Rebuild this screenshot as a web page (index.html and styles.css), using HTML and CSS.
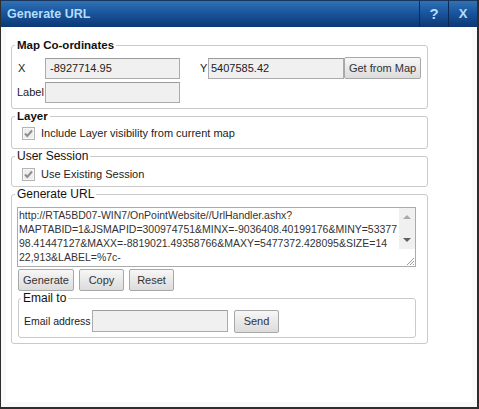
FILE: index.html
```html
<!DOCTYPE html>
<html lang="en">
<head>
    <meta charset="UTF-8">
    <meta name="viewport" content="width=device-width, initial-scale=1.0">
    <title>Generate URL</title>
    <link rel="stylesheet" href="styles.css">
</head>
<body>
    <div class="dialog">
        <div class="titlebar">
            <span class="title">Generate URL</span>
            <span class="title-button help">?</span>
            <span class="title-button close">X</span>
        </div>

        <div class="dialog-body">
            <fieldset class="group group-map">
                <legend class="strong">Map Co-ordinates</legend>
                <div class="row">
                    <label class="field-label label-x">X</label>
                    <input class="text-input" type="text" value="-8927714.95">
                    <label class="field-label label-y">Y</label>
                    <input class="text-input input-y" type="text" value="5407585.42">
                    <button class="btn btn-map">Get from Map</button>
                </div>
                <div class="row">
                    <label class="field-label">Label</label>
                    <input class="text-input" type="text">
                </div>
            </fieldset>

            <fieldset class="group group-layer">
                <legend class="strong">Layer</legend>
                <div class="check-row">
                    <span class="check">
                        <svg width="13" height="13" viewBox="0 0 13 13">
                            <rect x="0.5" y="0.5" width="12" height="12" fill="#e4e4e4" stroke="#b4b4b4"/>
                            <rect x="1.5" y="1.5" width="10" height="10" fill="#eeeeee" stroke="#f7f7f7"/>
                            <path d="M3 6.5 L5.3 9 L10 3.5" fill="none" stroke="#8e8e8e" stroke-width="2"/>
                        </svg>
                    </span>
                    <span>Include Layer visibility from current map</span>
                </div>
            </fieldset>

            <fieldset class="group group-session">
                <legend>User Session</legend>
                <div class="check-row">
                    <span class="check">
                        <svg width="13" height="13" viewBox="0 0 13 13">
                            <rect x="0.5" y="0.5" width="12" height="12" fill="#e4e4e4" stroke="#b4b4b4"/>
                            <rect x="1.5" y="1.5" width="10" height="10" fill="#eeeeee" stroke="#f7f7f7"/>
                            <path d="M3 6.5 L5.3 9 L10 3.5" fill="none" stroke="#8e8e8e" stroke-width="2"/>
                        </svg>
                    </span>
                    <span>Use Existing Session</span>
                </div>
            </fieldset>

            <fieldset class="group group-url">
                <legend>Generate URL</legend>
                <div class="url-box">
                    <textarea class="url-text" readonly>http://RTA5BD07-WIN7/OnPointWebsite//UrlHandler.ashx?
MAPTABID=1&amp;JSMAPID=300974751&amp;MINX=-9036408.40199176&amp;MINY=53377
98.41447127&amp;MAXX=-8819021.49358766&amp;MAXY=5477372.428095&amp;SIZE=14
22,913&amp;LABEL=%7c-</textarea>
                    <div class="scrollbar">
                        <span class="arrow arrow-up"></span>
                        <span class="arrow arrow-down"></span>
                    </div>
                    <svg class="grip" width="10" height="10" viewBox="0 0 10 10">
                        <path d="M9 2 L2 9 M9 5 L5 9 M9 8 L8 9" stroke="#9a9a9a" stroke-width="1"/>
                    </svg>
                </div>
                <div class="button-row">
                    <button class="btn btn-generate">Generate</button>
                    <button class="btn btn-small">Copy</button>
                    <button class="btn btn-small">Reset</button>
                </div>
                <fieldset class="group group-email">
                    <legend>Email to</legend>
                    <div class="row">
                        <label class="field-label label-email">Email address</label>
                        <input class="text-input input-email" type="text">
                        <button class="btn btn-send">Send</button>
                    </div>
                </fieldset>
            </fieldset>
        </div>
    </div>
</body>
</html>
```

FILE: styles.css
```css
body {
    margin: 0;
    font-family: "Liberation Sans", Arial, sans-serif;
    font-size: 11px;
    color: #222;
    background: #fff;
}

.dialog {
    width: 479px;
    height: 409px;
    box-sizing: border-box;
    border-left: 1px solid #2e2e2e;
    border-right: 2px solid #2e2e2e;
    border-bottom: 2px solid #2e2e2e;
    display: flex;
    flex-direction: column;
}

.titlebar {
    height: 27px;
    box-sizing: border-box;
    border-top: 1px solid #1b365e;
    background: linear-gradient(#2f72b6, #1a559d 45%, #0b3974);
    display: flex;
}

.title {
    flex: 1;
    padding-left: 6px;
    line-height: 26px;
    font-family: "Liberation Sans Narrow", "Liberation Sans", Arial, sans-serif;
    font-stretch: condensed;
    font-size: 12.5px;
    font-weight: bold;
    color: #b2defc;
}

.title-button {
    width: 28px;
    border-left: 1px solid #0b2a58;
    text-align: center;
    line-height: 26px;
    font-weight: bold;
    color: #b2defc;
}

.help {
    font-size: 15px;
}

.close {
    font-size: 13px;
}

.dialog-body {
    flex: 1;
    border: 5px solid #fafafa;
    border-top: 0;
    background: #fff;
}

.group {
    margin: 0;
    padding: 0 3px;
    border: 1px solid #cacaca;
    border-radius: 3px;
    min-width: 0;
}

.group legend {
    padding: 0 2px;
    line-height: 15px;
    font-size: 12px;
    color: #111;
}

.group legend.strong {
    font-size: 11.5px;
    font-weight: bold;
}

.dialog-body > .group {
    width: 417px;
    box-sizing: border-box;
    margin-left: 5px;
}

.group-map {
    margin-top: 11px;
    padding-top: 4px;
    padding-bottom: 5px;
}

.row {
    display: flex;
    align-items: center;
    height: 22px;
}

.group-map .row {
    margin-left: 2px;
}

.row + .row {
    margin-top: 2px;
}

.field-label {
    width: 28px;
    flex-shrink: 0;
    white-space: nowrap;
}

.label-x {
    width: 27px;
    padding-left: 1px;
}

.label-y {
    width: 8px;
    margin-left: 20px;
}

.text-input {
    width: 135px;
    height: 21px;
    box-sizing: border-box;
    margin: 0;
    padding: 0 4px;
    border: 1px solid #ababab;
    border-top-color: #9c9c9c;
    background: #f0f0f0;
    font-family: inherit;
    font-size: 11px;
    color: #222;
}

.input-y {
    width: 136px;
    padding-left: 2px;
}

.btn {
    height: 22px;
    box-sizing: border-box;
    margin: 0;
    padding: 0;
    border: 1px solid #a8a8a8;
    border-radius: 2px;
    background: linear-gradient(#f7f7f7, #e9e9e9 50%, #dcdcdc);
    font-family: inherit;
    font-size: 11px;
    color: #333;
}

.btn-map {
    width: 77px;
}

.group-layer {
    padding-top: 1px;
    padding-bottom: 7px;
}

.group-session {
    padding-top: 2px;
    padding-bottom: 4px;
}

.check-row {
    display: flex;
    align-items: center;
    height: 16px;
    color: #222;
}

.check {
    display: flex;
    margin: 0 6px 0 7px;
}

.group-url {
    padding-top: 5px;
    padding-bottom: 5px;
}

.url-box {
    position: relative;
    width: 399px;
    height: 60px;
    margin-left: 2px;
}

.url-text {
    display: block;
    width: 100%;
    height: 100%;
    box-sizing: border-box;
    margin: 0;
    padding: 0 1px;
    border: 1px solid #ababab;
    background: #fff;
    font-family: "Liberation Sans", Arial, sans-serif;
    font-size: 10.5px;
    line-height: 14px;
    color: #333;
    white-space: pre;
    overflow: hidden;
    resize: none;
}

.scrollbar {
    position: absolute;
    top: 1px;
    right: 1px;
    width: 16px;
    height: 41px;
    background: #f0f0f0;
}

.arrow {
    position: absolute;
    left: 4px;
    width: 0;
    height: 0;
    border-left: 4px solid transparent;
    border-right: 4px solid transparent;
}

.arrow-up {
    top: 7px;
    border-bottom: 4px solid #a9a9a9;
}

.arrow-down {
    top: 30px;
    border-top: 4px solid #606060;
}

.grip {
    position: absolute;
    right: 1px;
    bottom: 1px;
}

.button-row {
    display: flex;
    gap: 5px;
    margin: 2px 0 0 3px;
}

.btn-generate {
    width: 56px;
}

.btn-small {
    width: 45px;
}

.group-email {
    width: 398px;
    box-sizing: border-box;
    margin-left: 3px;
    padding: 4px 2px 5px 2px;
}

.label-email {
    width: 68px;
    margin-left: 3px;
    font-size: 10.5px;
}

.input-email {
    width: 136px;
    height: 22px;
}

.btn-send {
    width: 45px;
    height: 23px;
    margin-left: 6px;
}
```
